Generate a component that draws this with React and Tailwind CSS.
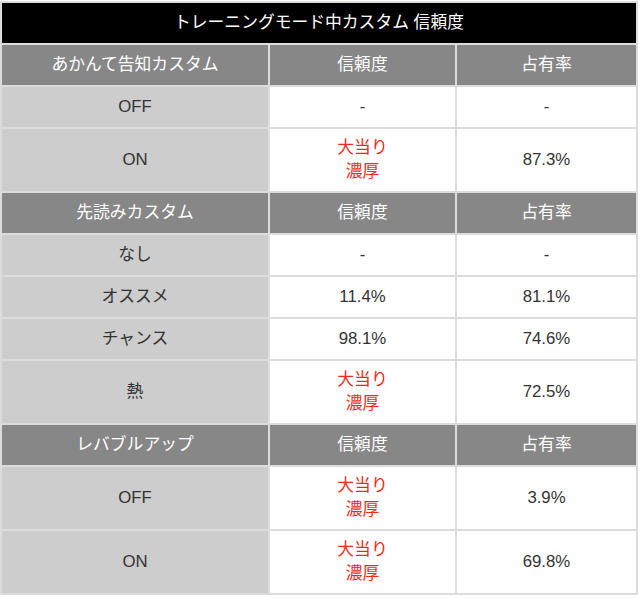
import React from "react";

const RED = "text-[#ee2a1a]";

function Red() {
  return (
    <span className={`${RED} leading-[24px]`}>
      大当り
      <br />
      濃厚
    </span>
  );
}

function Header({ label }) {
  return (
    <>
      <div className="h-[40px] bg-[#878787] text-white flex items-center justify-center">{label}</div>
      <div className="h-[40px] bg-[#878787] text-white flex items-center justify-center">信頼度</div>
      <div className="h-[40px] bg-[#878787] text-white flex items-center justify-center">占有率</div>
    </>
  );
}

function Row({ label, a, b, tall }) {
  const h = tall ? "h-[62px]" : "h-[40px]";
  return (
    <>
      <div className={`${h} bg-[#cdcdcd] text-[#333] flex items-center justify-center`}>{label}</div>
      <div className={`${h} bg-white text-[#333] flex items-center justify-center text-center`}>{a}</div>
      <div className={`${h} bg-white text-[#333] flex items-center justify-center`}>{b}</div>
    </>
  );
}

export default function App() {
  return (
    <div className="w-[640px] h-[598px] bg-white pt-[1px]" style={{ fontFamily: '"Liberation Sans", "Noto Sans CJK JP", sans-serif' }}>
      <div className="w-[638px] bg-[#dcdcdc] p-[2px] text-[16.8px]">
        <div className="grid grid-cols-[266px_185px_179px] gap-[2px]">
          <div className="col-span-3 h-[40px] bg-black text-white flex items-center justify-center">
            トレーニングモード中カスタム 信頼度
          </div>
          <Header label="あかんて告知カスタム" />
          <Row label="OFF" a="-" b="-" />
          <Row label="ON" a={<Red />} b="87.3%" tall />
          <Header label="先読みカスタム" />
          <Row label="なし" a="-" b="-" />
          <Row label="オススメ" a="11.4%" b="81.1%" />
          <Row label="チャンス" a="98.1%" b="74.6%" />
          <Row label="熱" a={<Red />} b="72.5%" tall />
          <Header label="レバブルアップ" />
          <Row label="OFF" a={<Red />} b="3.9%" tall />
          <Row label="ON" a={<Red />} b="69.8%" tall />
        </div>
      </div>
    </div>
  );
}
